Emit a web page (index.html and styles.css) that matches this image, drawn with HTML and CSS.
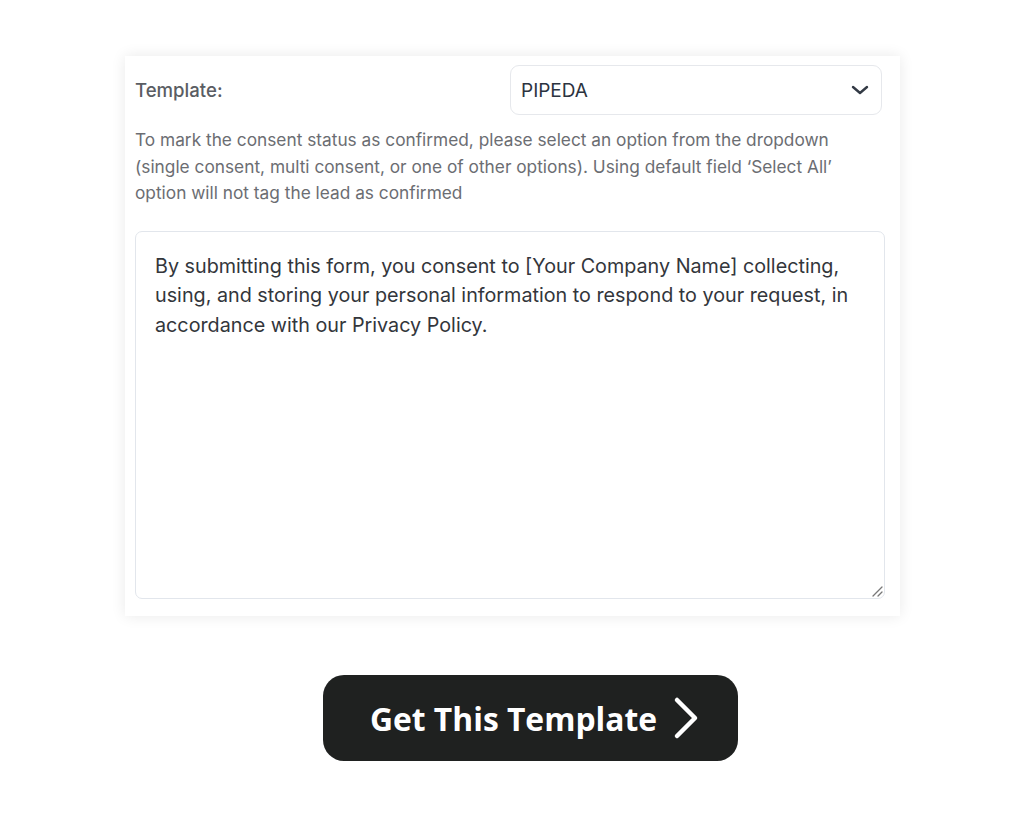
FILE: index.html
```html
<!doctype html>
<html>
  <head>
    <meta charset="UTF-8" />
    <title>Consent Template</title>
    <link rel="stylesheet" href="styles.css">
  </head>
  <body>
    <div class="card">
      <div class="row">
        <label class="label" for="template">Template:</label>
        <div class="select">
          <span>PIPEDA</span>
          <svg width="18" height="10" viewBox="0 0 18 10">
            <path d="M2 2 L9 8 L16 2" fill="none" stroke="#333a45" stroke-width="2.4" stroke-linecap="round" stroke-linejoin="round" />
          </svg>
        </div>
      </div>
      <p class="help">
        To mark the consent status as confirmed, please select an option from the dropdown
        (single consent, multi consent, or one of other options). Using default field ‘Select All’
        option will not tag the lead as confirmed
      </p>
      <div class="textarea">
        <p>By submitting this form, you consent to [Your Company Name] collecting, using, and storing your personal information to respond to your request, in accordance with our Privacy Policy.</p>
        <svg class="grip" width="12" height="12" viewBox="0 0 12 12">
          <path d="M11 2 L2 11 M11 7 L7 11" stroke="#777" stroke-width="1.3" stroke-linecap="round" />
        </svg>
      </div>
    </div>

    <a class="cta" href="#">
      <span>Get This Template</span>
      <svg width="26" height="44" viewBox="0 0 26 44">
        <path d="M4 4 L22 22 L4 40" fill="none" stroke="#fff" stroke-width="4.5" stroke-linecap="round" stroke-linejoin="round" />
      </svg>
    </a>
  </body>
</html>
```

FILE: styles.css
```css
* {
  box-sizing: border-box;
}

body {
  margin: 0;
  background: #fff;
  font-family: Inter, "Noto Sans", sans-serif;
  display: flex;
  flex-direction: column;
  align-items: center;
}

.card {
  width: 775px;
  height: 560px;
  margin-top: 56px;
  margin-left: 1px;
  padding: 9px 15px 17px 10px;
  background: #fff;
  box-shadow: 0 0 14px rgba(0, 0, 0, 0.09);
  display: flex;
  flex-direction: column;
}

.row {
  display: flex;
  align-items: center;
  justify-content: space-between;
  padding-right: 3px;
}

.label {
  font-size: 18.6px;
  font-weight: 500;
  color: #5a5d63;
}

.select {
  width: 372px;
  height: 50px;
  border: 1px solid #e6e8ec;
  border-radius: 9px;
  display: flex;
  align-items: center;
  justify-content: space-between;
  padding: 0 12px 0 10px;
  font-size: 19px;
  color: #2c3340;
}

.help {
  margin: 12px 0 0;
  font-size: 17.3px;
  line-height: 26.5px;
  color: #6b6d72;
}

.textarea {
  position: relative;
  margin-top: 24px;
  flex: 1;
  border: 1px solid #e2e6ec;
  border-radius: 7px;
  padding: 20px 19px;
}

.textarea p {
  margin: 0;
  font-size: 19.75px;
  line-height: 29.5px;
  color: #33363b;
}

.grip {
  position: absolute;
  right: 1px;
  bottom: 1px;
}

.cta {
  margin-top: 59px;
  margin-left: 37px;
  width: 415px;
  height: 86px;
  border-radius: 21px;
  background: #1f2120;
  display: flex;
  align-items: center;
  padding-left: 47px;
  gap: 16px;
  text-decoration: none;
  color: #fff;
  font-family: "Open Sans", sans-serif;
  font-weight: 700;
  font-size: 31.8px;
}
```
